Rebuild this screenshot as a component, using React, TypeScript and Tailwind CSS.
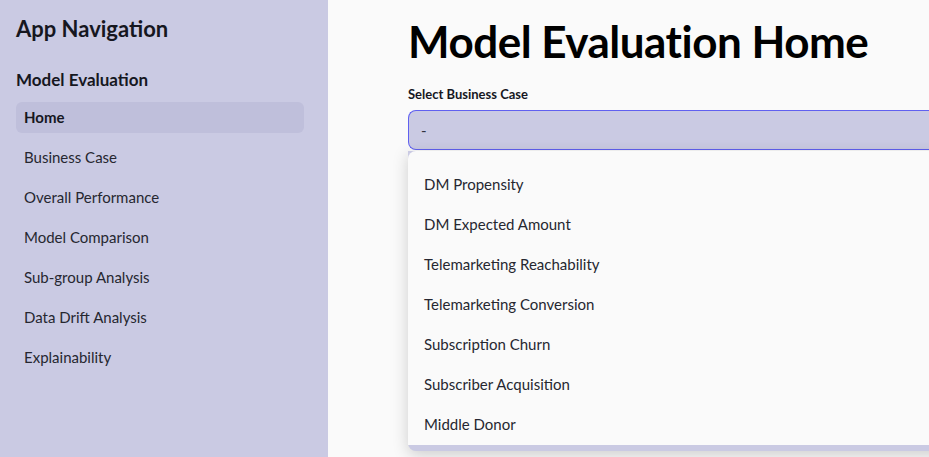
import React from 'react';

const navItems = [
  'Home',
  'Business Case',
  'Overall Performance',
  'Model Comparison',
  'Sub-group Analysis',
  'Data Drift Analysis',
  'Explainability',
];

const options = [
  'DM Propensity',
  'DM Expected Amount',
  'Telemarketing Reachability',
  'Telemarketing Conversion',
  'Subscription Churn',
  'Subscriber Acquisition',
  'Middle Donor',
];

const App: React.FC = () => {
  return (
    <div className="flex h-[457px] w-[929px] overflow-hidden bg-[#fafafa] text-[#262730] font-['Lato','Noto_Sans',sans-serif]">
      {/* sidebar */}
      <aside className="w-[328px] shrink-0 bg-[#cacae3] px-4 pt-[14px]">
        <h2 className="text-[22px] font-bold leading-[30px] text-[#16171f]">App Navigation</h2>
        <p className="mt-[24px] text-[17px] font-bold leading-6 text-[#16171f]">Model Evaluation</p>
        <nav className="mt-[10px] w-[288px]">
          {navItems.map((item, i) => (
            <div
              key={item}
              className={`flex h-[31px] items-center rounded-md px-2 text-[15px] ${
                i === 0 ? 'bg-[#bfbfdb] font-bold text-[#16171f]' : 'mt-[9px] text-[#262730]'
              }`}
            >
              {item}
            </div>
          ))}
        </nav>
      </aside>

      {/* main */}
      <main className="min-w-[700px] pl-20 pt-[15px]">
        <h1 className="text-[44px] font-bold leading-[52px] tracking-[-0.5px] text-black">Model Evaluation Home</h1>
        <label className="mt-[17px] block text-[13px] font-bold leading-5 text-[#16171f]">Select Business Case</label>
        <div className="relative mt-[6px] w-[560px]">
          <div className="flex h-10 items-center rounded-l-lg border border-r-0 border-[#6060f0] bg-[#cacae3] px-3 text-[15px] text-[#31333f]">
            -
          </div>
          <div className="absolute left-0 top-[41px] w-full rounded-b-lg bg-[#cacae3] pb-[6px] shadow-[0_4px_16px_rgba(0,0,0,0.18)]">
            <ul className="rounded-t-lg bg-[#fafafa] pt-[13px] pb-[1px]">
              {options.map((o) => (
                <li key={o} className="flex h-10 items-center px-4 text-[15px] text-[#262730]">
                  {o}
                </li>
              ))}
            </ul>
          </div>
        </div>
      </main>
    </div>
  );
};

export default App;
